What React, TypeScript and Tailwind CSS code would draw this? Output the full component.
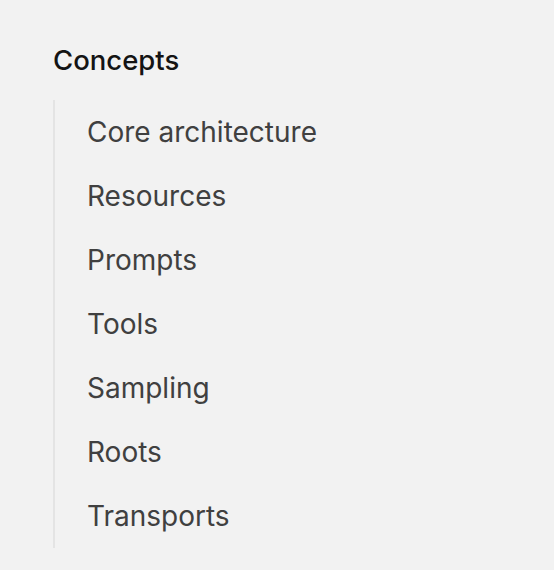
const items = [
  "Core architecture",
  "Resources",
  "Prompts",
  "Tools",
  "Sampling",
  "Roots",
  "Transports",
];

export default function App() {
  return (
    <div
      className="min-h-[570px] w-full bg-[#f2f2f2] pl-[53px] pt-[42px]"
      style={{ fontFamily: "Inter, 'Noto Sans', sans-serif" }}
    >
      <h5 className="text-[27.5px] font-medium leading-[36px] text-[#141414]">Concepts</h5>
      <ul className="mt-[22px] border-l-2 border-[#e4e4e4]">
        {items.map((item) => (
          <li key={item} className="flex h-16 items-center pl-[32px]">
            <a href="#" className="text-[28px] text-[#404040]">
              {item}
            </a>
          </li>
        ))}
      </ul>
    </div>
  );
}
